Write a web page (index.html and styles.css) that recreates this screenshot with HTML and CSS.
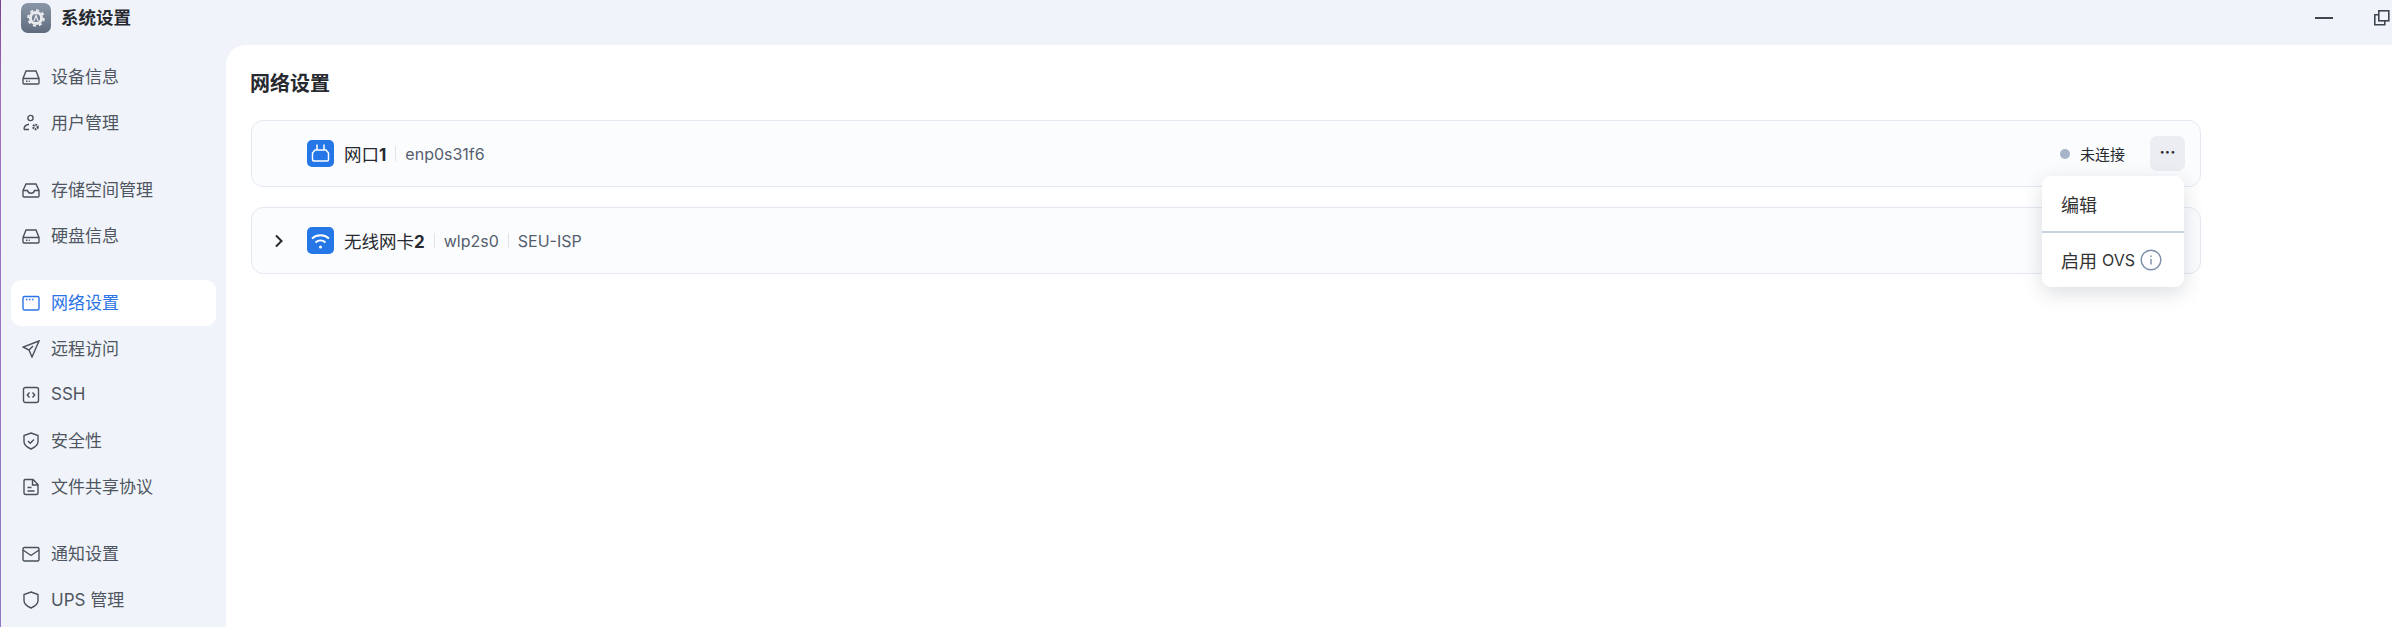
FILE: index.html
```html
<!DOCTYPE html>
<html lang="zh-CN">
<head>
    <meta charset="UTF-8">
    <title>系统设置</title>
    <link rel="stylesheet" href="styles.css">
</head>
<body>

<header class="titlebar">
    <div class="app-title">
        <span class="app-icon">
            <svg viewBox="0 0 30 30" width="30" height="30"><g fill="none" stroke="#e8eaee"><circle cx="15" cy="15" r="7.8" stroke-width="2" stroke-dasharray="3.1 3"/><circle cx="15" cy="15" r="5.6" stroke-width="3"/><path d="M13 18 15 12.400 17 18" stroke-width="1.3"/></g></svg>
        </span>
        <span>系统设置</span>
    </div>
    <div class="window-btns">
        <svg viewBox="0 0 18 18" width="18" height="18"><path d="M0 9h18" stroke="#3f4650" stroke-width="2"/></svg>
        <svg viewBox="0 0 18 18" width="18" height="18"><g fill="none" stroke="#3f4650" stroke-width="1.6"><rect x="6.800" y="1.800" width="10" height="10"/><path d="M6.800 5.800H2.800v10h10v-4"/></g></svg>
    </div>
</header>

<div class="layout">
    <nav class="sidebar">
        <div class="nav-group">
            <a class="nav-item"><svg viewBox="0 0 18 18"><path d="M1 10.500 4 3h10l3 7.500V15a1 1 0 0 1-1 1H2a1 1 0 0 1-1-1zM1 10.500h16M4 13.300h1.500M6.800 13.300h1"/></svg><span>设备信息</span></a>
            <a class="nav-item"><svg viewBox="0 0 18 18"><circle cx="8.500" cy="4" r="2.600"/><path d="M2 15.500h5M2 15.500c0-3 2-4.800 5-5.200"/><circle cx="13.500" cy="13" r="2.200" stroke-width="2.200" stroke-dasharray="1.500 .8"/></svg><span>用户管理</span></a>
        </div>
        <div class="nav-group">
            <a class="nav-item"><svg viewBox="0 0 18 18"><path d="M1 9.500 4 3h10l3 6.500V15a1 1 0 0 1-1 1H2a1 1 0 0 1-1-1zM1 9.500h4.500c.5 2 1.700 2.800 3.500 2.800s3-.8 3.500-2.800H17"/></svg><span>存储空间管理</span></a>
            <a class="nav-item"><svg viewBox="0 0 18 18"><path d="M1 10.500 4 3h10l3 7.500V15a1 1 0 0 1-1 1H2a1 1 0 0 1-1-1zM1 10.500h16M4 13.300h1.500M6.800 13.300h1"/></svg><span>硬盘信息</span></a>
        </div>
        <div class="nav-group">
            <a class="nav-item active"><svg viewBox="0 0 18 18"><rect x="1" y="2.500" width="16" height="13.500" rx="1.500"/><path d="M4 5.500h1.500M7 5.500h1.500M10 5.500h1.500" stroke-width="1.500"/></svg><span>网络设置</span></a>
            <a class="nav-item"><svg viewBox="0 0 18 18"><path d="M17 1 1 7l6 3 3 7zM7 10l4-4"/></svg><span>远程访问</span></a>
            <a class="nav-item"><svg viewBox="0 0 18 18"><rect x="1.500" y="1.500" width="15" height="15" rx="2"/><path d="M7.500 6.500 5.300 9l2.200 2.500M10.500 6.500l2.200 2.500-2.200 2.500"/></svg><span>SSH</span></a>
            <a class="nav-item"><svg viewBox="0 0 18 18"><path d="M9 1l7 2.600v6c0 3.500-3.500 6-7 7.400-3.500-1.400-7-3.900-7-7.400v-6zM6 9l2.200 2.200L12 7.500"/></svg><span>安全性</span></a>
            <a class="nav-item"><svg viewBox="0 0 18 18"><path d="M3 1.500h8l5 5V15a1.500 1.500 0 0 1-1.500 1.500h-11A1.500 1.500 0 0 1 2 15V3a1.500 1.500 0 0 1 1-1.500zM10.500 1.500V7H16M5.500 9.500h4M5.500 13h7"/></svg><span>文件共享协议</span></a>
        </div>
        <div class="nav-group">
            <a class="nav-item"><svg viewBox="0 0 18 18"><rect x="1" y="2.500" width="16" height="13.500" rx="1.500"/><path d="M1 5l8 5.500L17 5"/></svg><span>通知设置</span></a>
            <a class="nav-item"><svg viewBox="0 0 18 18"><path d="M9 1l7 2.600v6c0 3.500-3.500 6-7 7.400-3.500-1.400-7-3.900-7-7.400v-6z"/></svg><span>UPS 管理</span></a>
        </div>
    </nav>

    <main class="content">
        <h2 class="page-title">网络设置</h2>

        <div class="net-card">
            <span class="chevron"></span>
            <span class="net-icon">
                <svg viewBox="0 0 27 27" width="27" height="27"><path d="M10 4.500V10M17 4.500V10M8 10h11l2.500 3v6.500a1.500 1.500 0 0 1-1.500 1.500H7a1.500 1.500 0 0 1-1.500-1.500V13z" fill="none" stroke="#fff" stroke-width="1.500"/></svg>
            </span>
            <span class="net-name">网口<b>1</b></span>
            <span class="net-meta">enp0s31f6</span>
            <span class="net-status"><i class="dot"></i>未连接</span>
            <span class="more-btn">···</span>
        </div>

        <div class="net-card">
            <span class="chevron">
                <svg viewBox="0 0 12 14" width="12" height="14"><path d="M3 1.500 8.500 7 3 12.500" fill="none" stroke="#26292e" stroke-width="2"/></svg>
            </span>
            <span class="net-icon">
                <svg viewBox="0 0 27 27" width="27" height="27"><g fill="none" stroke="#fff" stroke-width="2"><path d="M5 11.500c4.800-4.200 12.200-4.200 17 0M8.500 15.500c3-2.600 7-2.600 10 0"/></g><circle cx="13.500" cy="20" r="1.500" fill="#fff"/></svg>
            </span>
            <span class="net-name">无线网卡<b>2</b></span>
            <span class="net-meta">wlp2s0</span>
            <span class="net-meta">SEU-ISP</span>
        </div>

        <div class="menu">
            <div class="menu-item">编辑</div>
            <div class="menu-item">启用 <span class="latin">OVS</span>
                <svg viewBox="0 0 22 22" width="22" height="22"><circle cx="11" cy="11" r="9.800" fill="none" stroke="#7d8fa8" stroke-width="1.400"/><path d="M11 6.500v1.500M11 10v5.500" stroke="#7d8fa8" stroke-width="1.400"/></svg>
            </div>
        </div>
    </main>
</div>

</body>
</html>
```

FILE: styles.css
```css
/* General Styles */
* {
    box-sizing: border-box;
}
html, body {
    height: 100%;
}
body {
    margin: 0;
    font-family: Inter, "Noto Sans CJK SC", sans-serif;
    font-size: 16px;
    background-color: #f0f4fa;
    color: #26292e;
    border-left: 1px solid;
    border-image: linear-gradient(#7a3f90, #a070c0 15%, #8f78c8) 1;
    overflow: hidden;
}

/* Title bar */
.titlebar {
    height: 45px;
    display: flex;
    justify-content: space-between;
    padding: 3px 0 0 20px;
}
.app-title {
    display: flex;
    align-items: flex-start;
    gap: 10px;
    font-size: 17.5px;
    font-weight: 700;
    line-height: 30px;
}
.app-icon {
    width: 30px;
    height: 30px;
    border-radius: 7px;
    background: linear-gradient(#8a97a8, #5f6c7e);
}
.app-icon svg {
    display: block;
}
.window-btns {
    display: flex;
    gap: 39px;
    padding-top: 6px;
    margin-right: 2px;
}

/* Sidebar */
.layout {
    display: flex;
    height: calc(100% - 45px);
}
.sidebar {
    width: 225px;
    padding: 9px 10px 0;
    flex-shrink: 0;
}
.nav-group {
    margin-bottom: 21px;
}
.nav-item {
    height: 46px;
    display: flex;
    align-items: center;
    gap: 11px;
    padding-left: 11px;
    color: #4f5661;
    font-size: 17px;
    border-radius: 10px;
}
.nav-item span {
    padding-bottom: 3px;
}
.nav-item svg {
    width: 18px;
    height: 18px;
    fill: none;
    stroke: #4a505a;
    stroke-width: 1.4;
    flex-shrink: 0;
}
.nav-item.active {
    background: #fff;
    color: #2b74e6;
}
.nav-item.active svg {
    stroke: #2b74e6;
}

/* Main panel */
.content {
    flex: 1;
    position: relative;
    background: #fff;
    border-top-left-radius: 20px;
    padding: 25px 0 0 25px;
}
.page-title {
    margin: 0 0 22px -1px;
    font-size: 20px;
    line-height: 28px;
    font-weight: 700;
}
.net-card {
    width: 1950px;
    height: 67px;
    display: flex;
    align-items: center;
    margin-bottom: 20px;
    padding: 0 15px 0 21px;
    background: #fbfcfe;
    border: 1px solid #e4e9f1;
    border-radius: 12px;
}
.chevron {
    width: 12px;
    height: 14px;
    margin-right: 22px;
}
.chevron svg {
    display: block;
}
.net-icon {
    width: 27px;
    height: 27px;
    margin-right: 10px;
    background: #2576e6;
    border-radius: 5px;
}
.net-icon svg {
    display: block;
}
.net-name {
    font-size: 17.5px;
    color: #26292e;
}
.net-name b {
    font-size: 17px;
    font-weight: 700;
}
.net-meta {
    font-size: 16px;
    color: #555e6e;
    margin-left: 9px;
    padding-left: 10px;
    background: linear-gradient(#dfe4ec, #dfe4ec) left center / 1px 15px no-repeat;
}
.net-status {
    margin-left: auto;
    display: flex;
    align-items: center;
    gap: 10px;
    font-size: 15px;
}
.dot {
    width: 10px;
    height: 10px;
    border-radius: 50%;
    background: #a5b4c8;
}
.more-btn {
    width: 35px;
    height: 35px;
    margin-left: 25px;
    background: #ecedf2;
    border-radius: 7px;
    text-align: center;
    line-height: 33px;
    font-size: 16px;
    font-weight: 700;
}

/* Dropdown */
.menu {
    position: absolute;
    left: 1816px;
    top: 131px;
    width: 142px;
    background: #fff;
    border-radius: 9px;
    box-shadow: 0 6px 20px rgba(40, 50, 70, 0.16);
}
.menu-item {
    height: 55px;
    display: flex;
    align-items: center;
    gap: 5px;
    padding-left: 19px;
    font-size: 18px;
    color: #333;
}
.menu-item + .menu-item {
    height: 56px;
    border-top: 2px solid #c9d4e0;
}
.latin {
    font-size: 16px;
}
```
